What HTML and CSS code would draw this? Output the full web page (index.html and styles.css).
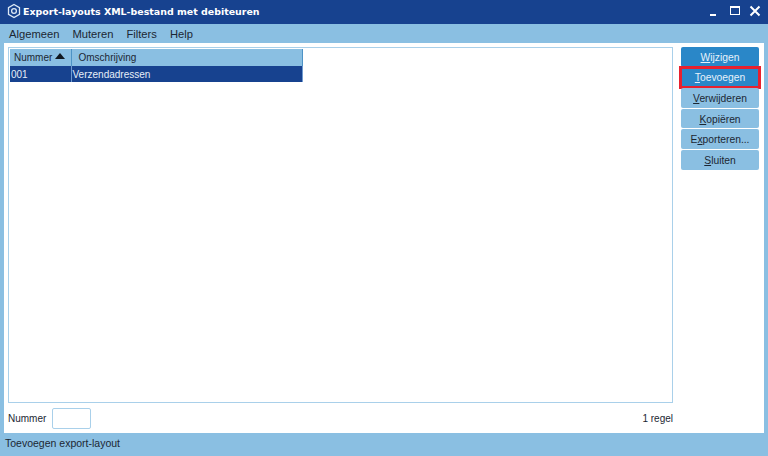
FILE: index.html
```html
<!DOCTYPE html>
<html lang="en">
<head>
    <meta charset="UTF-8">
    <title>Export-layouts XML-bestand met debiteuren</title>
    <link rel="stylesheet" href="styles.css">
</head>
<body>
    <div class="titlebar">
        <svg class="app-icon" width="16" height="16" viewBox="0 0 16 16" fill="none" stroke="#dce8f5">
            <path d="M8 1.5 13.5 4.7V11.3L8 14.5 2.5 11.3V4.7Z" stroke-width="1.3"/>
            <circle cx="8" cy="8" r="2.4" stroke-width="1.3"/>
        </svg>
        <span class="title">Export-layouts XML-bestand met debiteuren</span>
        <div class="window-buttons">
            <svg width="12" height="12" viewBox="0 0 12 12"><rect x="1" y="9" width="6" height="2" fill="#fff"/></svg>
            <svg width="12" height="12" viewBox="0 0 12 12" fill="none" stroke="#fff"><rect x="1.5" y="1.5" width="9" height="8"/><path d="M1 2h10" stroke-width="2"/></svg>
            <svg width="12" height="12" viewBox="0 0 12 12" fill="none" stroke="#fff" stroke-width="2"><path d="M1.5 1.5 10.5 10.5M10.5 1.5 1.5 10.5"/></svg>
        </div>
    </div>

    <nav class="menu">
        <span>Algemeen</span>
        <span>Muteren</span>
        <span>Filters</span>
        <span>Help</span>
    </nav>

    <div class="panel">
        <div class="left">
            <div class="listbox">
                <table class="grid">
                    <tr>
                        <th class="col-nr">Nummer <span class="sort"></span></th>
                        <th class="col-desc">Omschrijving</th>
                    </tr>
                    <tr class="selected">
                        <td>001</td>
                        <td>Verzendadressen</td>
                    </tr>
                </table>
            </div>
            <div class="footer">
                <label>Nummer</label>
                <input class="nr-input" type="text">
                <span class="count">1 regel</span>
            </div>
        </div>
        <div class="buttons">
            <button class="btn active"><u>W</u>ijzigen</button>
            <button class="btn active focus"><u>T</u>oevoegen</button>
            <button class="btn"><u>V</u>erwijderen</button>
            <button class="btn"><u>K</u>opiëren</button>
            <button class="btn">E<u>x</u>porteren...</button>
            <button class="btn"><u>S</u>luiten</button>
        </div>
    </div>

    <div class="statusbar">Toevoegen export-layout</div>
</body>
</html>
```

FILE: styles.css
```css
:root {
    --dark-blue: #17428f;
    --light-blue: #8abfe2;
    --mid-blue: #2a87c8;
    --text-color: #1c2733;
}

* {
    box-sizing: border-box;
}

body {
    margin: 0;
    width: 768px;
    height: 456px;
    overflow: hidden;
    display: flex;
    flex-direction: column;
    font-family: "Liberation Sans", sans-serif;
    font-size: 10px;
    color: var(--text-color);
    background-color: var(--light-blue);
}

.titlebar {
    height: 24px;
    flex: none;
    display: flex;
    align-items: center;
    padding: 0 6px 2px;
    gap: 1px;
    background-color: var(--dark-blue);
    color: white;
}

.title {
    font-family: "DejaVu Sans", sans-serif;
    font-weight: bold;
    font-size: 9.45px;
}

.window-buttons {
    margin-left: auto;
    display: flex;
    gap: 8px;
    padding-right: 1px;
}

.menu {
    height: 19px;
    flex: none;
    display: flex;
    align-items: center;
    gap: 13px;
    padding-left: 9px;
    font-size: 11.2px;
}

.panel {
    flex: 1;
    margin: 0 4px;
    padding: 4px 5px 0 4px;
    display: flex;
    gap: 8px;
    background: white;
}

.left {
    flex: 1;
    display: flex;
    flex-direction: column;
}

.listbox {
    height: 356px;
    flex: none;
    padding: 1px;
    border: 1px solid #a9d0ea;
}

.grid {
    border-collapse: collapse;
    table-layout: fixed;
    width: 293px;
}

.grid th {
    height: 17px;
    padding: 0 0 0 4px;
    font-weight: normal;
    text-align: left;
    white-space: nowrap;
    background-color: var(--light-blue);
    border-right: 1px solid #4d93c6;
}

.grid th.col-nr {
    width: 61px;
}

.grid th.col-desc {
    padding-left: 7px;
}

.sort {
    display: inline-block;
    margin: 0 0 2px 0;
    border-left: 5px solid transparent;
    border-right: 5px solid transparent;
    border-bottom: 6px solid #10181f;
}

.grid td {
    height: 16px;
    padding: 0 0 0 1px;
    color: #e6eef8;
    background-color: var(--dark-blue);
    border-right: 1px solid #6f9bd0;
}

.footer {
    flex: 1;
    display: flex;
    align-items: flex-start;
    padding-top: 5px;
}

.footer label {
    margin-top: 5px;
    width: 44px;
}

.nr-input {
    width: 39px;
    height: 21px;
    border: 1px solid #a9d0ea;
    border-radius: 2px;
    background: white;
}

.count {
    margin-left: auto;
    margin-top: 5px;
}

.buttons {
    width: 78px;
    flex: none;
    display: flex;
    flex-direction: column;
    gap: 1px;
}

.btn {
    height: 19.6px;
    padding: 1px 0 0;
    border: 0;
    border-radius: 2px;
    font-family: inherit;
    font-size: 10.3px;
    color: var(--text-color);
    background-color: var(--light-blue);
}

.btn.active {
    color: #e6f1fa;
    background-color: var(--mid-blue);
}

.btn.focus {
    outline: 3px solid #e8202e;
    outline-offset: -1px;
    border-radius: 0;
}

.statusbar {
    height: 23px;
    flex: none;
    display: flex;
    align-items: center;
    padding: 0 0 4px 5px;
    font-size: 10.5px;
}
```
